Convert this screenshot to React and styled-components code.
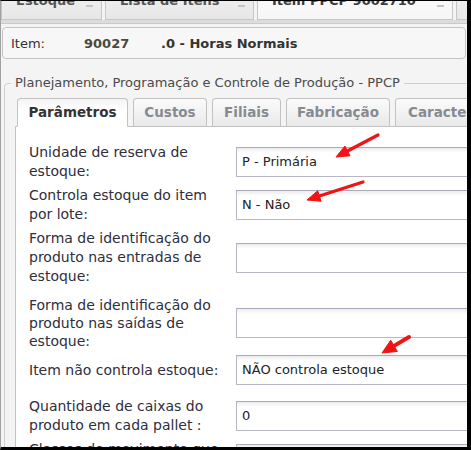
import React from "react";
import styled, { createGlobalStyle } from "styled-components";

const GlobalStyle = createGlobalStyle`
  html, body {
    margin: 0;
    padding: 0;
    background: #000;
  }
`;

const Frame = styled.div`
  position: relative;
  width: 471px;
  height: 450px;
  box-sizing: border-box;
  border-top: 1px solid #000;
  border-right: 4px solid #000;
  border-bottom: 3px solid #000;
  border-left: 1px solid #a0a0a0;
  background: #f4f4f4;
  overflow: hidden;
  display: flex;
  flex-direction: column;
  font-family: "DejaVu Sans", Verdana, sans-serif;
`;

/* window tabs along the top, scrolled partly out of view */
const WindowTabs = styled.div`
  display: flex;
  gap: 3px;
  height: 29px;
  margin-top: -10px;
  flex-shrink: 0;
`;

const WindowTab = styled.div`
  position: relative;
  box-sizing: border-box;
  width: ${(p) => p.$w}px;
  flex-shrink: 0;
  height: 100%;
  border: 1px solid #c6c6c6;
  border-top: none;
  background: ${(p) =>
    p.$active
      ? "linear-gradient(#fbfbfb, #f6f6f6)"
      : "linear-gradient(#f0f0f0, #e7e7e7)"};
  padding-left: 14px;
  font-size: 13px;
  font-weight: bold;
  line-height: 20px;
  color: ${(p) => (p.$active ? "#3a3a3a" : "#555")};
  white-space: nowrap;
  overflow: hidden;
`;

const CloseMark = styled.span`
  position: absolute;
  right: 8px;
  top: 14px;
  width: 7px;
  height: 2px;
  background: #c4c4c4;
`;

const TabStripEdge = styled.div`
  height: 3px;
  background: #dcdcdc;
  border-bottom: 1px solid #cacaca;
  flex-shrink: 0;
`;

const HeaderBox = styled.div`
  display: flex;
  align-items: center;
  height: 30px;
  margin: 3px 1px 0 1px;
  padding-left: 8px;
  border: 1px solid #c4c4c4;
  border-radius: 4px;
  background: #f7f7f7;
  font-size: 13px;
  color: #333;
  flex-shrink: 0;
`;

const HeaderField = styled.span`
  width: ${(p) => (p.$w ? `${p.$w}px` : "auto")};
  font-weight: ${(p) => (p.$bold ? "bold" : "normal")};
  color: ${(p) => p.$color || "#333"};
`;

const Group = styled.fieldset`
  margin: 16px -20px 0 3px;
  padding: 0;
  border: 1px solid #cfcfcf;
  border-radius: 4px;
  flex: 1;
  display: flex;
  flex-direction: column;
  min-width: 0;
`;

const GroupTitle = styled.legend`
  margin-left: 6px;
  padding: 0 4px;
  font-size: 13px;
  line-height: 16px;
  color: #4a4a4a;
`;

const TabRow = styled.div`
  display: flex;
  align-items: flex-end;
  gap: 5px;
  margin: 6px 0 0 10px;
  padding-left: 2px;
  height: 29px;
  position: relative;
  z-index: 1;
`;

const Tab = styled.div`
  box-sizing: border-box;
  width: ${(p) => p.$w}px;
  flex-shrink: 0;
  height: ${(p) => (p.$active ? 29 : 28)}px;
  margin-bottom: ${(p) => (p.$active ? -1 : 0)}px;
  border: 1px solid #c2c2c2;
  border-bottom: ${(p) => (p.$active ? "1px solid #fff" : "none")};
  border-radius: 4px 4px 0 0;
  background: ${(p) =>
    p.$active ? "linear-gradient(#f4f4f4, #fff 40%)" : "linear-gradient(#fbfbfb, #e9e9e9)"};
  font-size: 13.5px;
  font-weight: bold;
  line-height: 26px;
  color: ${(p) => (p.$active ? "#333" : "#868a92")};
  white-space: nowrap;
  overflow: hidden;
  padding: ${(p) => (p.$left ? "0 0 0 12px" : "0")};
  text-align: ${(p) => (p.$left ? "left" : "center")};
`;

const Panel = styled.div`
  flex: 1;
  margin-left: 10px;
  padding: 16px 0 0 13px;
  border-top: 1px solid #c2c2c2;
  border-left: 1px solid #c2c2c2;
  background: #fff;
`;

const Form = styled.div`
  display: flex;
  flex-direction: column;
  gap: 5px;
`;

const Row = styled.div`
  display: grid;
  grid-template-columns: 207px 260px;
  align-items: center;
  margin-top: ${(p) => p.$shift || 0}px;
`;

const Label = styled.div`
  font-size: 14px;
  line-height: ${(p) => (p.$tight ? 18 : 19)}px;
  color: #2e2e3c;
  white-space: nowrap;
`;

const Input = styled.div`
  box-sizing: border-box;
  height: 30px;
  border: 1px solid #b9b9c6;
  border-top-color: #a9a9b8;
  background: linear-gradient(#ececf0, #fff 5px);
  padding-left: 5px;
  font-size: 13px;
  line-height: 28px;
  color: #222;
  white-space: nowrap;
`;

const Overlay = styled.svg`
  position: absolute;
  top: -1px;
  left: -1px;
  pointer-events: none;
`;

const rows = [
  { lines: ["Unidade de reserva de", "estoque:"], value: "P - Primária" },
  { lines: ["Controla estoque do item", "por lote:"], value: "N - Não" },
  { lines: ["Forma de identificação do", "produto nas entradas de", "estoque:"], value: "" },
  { lines: ["Forma de identificação do", "produto nas saídas de", "estoque:"], value: "", tight: true, shift: 5 },
  { lines: ["Item não controla estoque:"], value: "NÃO controla estoque" },
  { lines: ["Quantidade de caixas do", "produto em cada pallet :"], value: "0", shift: 7 },
  { lines: ["Classes de movimento que", "geram estoque:"], value: "S - S" },
];

function Arrow({ from, to, head = 13, spread = 11, width = 3.2 }) {
  const [x1, y1] = from;
  const [x2, y2] = to;
  const len = Math.hypot(x2 - x1, y2 - y1);
  const ux = (x2 - x1) / len;
  const uy = (y2 - y1) / len;
  const bx = x2 - ux * head;
  const by = y2 - uy * head;
  const nx = -uy * (spread / 2);
  const ny = ux * (spread / 2);
  return (
    <g fill="#f01414" stroke="#f01414">
      <line x1={x1} y1={y1} x2={bx} y2={by} strokeWidth={width} strokeLinecap="round" />
      <polygon
        points={`${x2},${y2} ${bx + nx},${by + ny} ${bx - nx},${by - ny}`}
        strokeWidth="1"
        strokeLinejoin="round"
      />
    </g>
  );
}

export default function App() {
  return (
    <>
      <GlobalStyle />
      <Frame>
        <WindowTabs>
          <WindowTab $w={101}>
            Estoque
            <CloseMark />
          </WindowTab>
          <WindowTab $w={149}>
            Lista de Itens
            <CloseMark />
          </WindowTab>
          <WindowTab $w={196} $active>
            Item PPCP 9002710
            <CloseMark />
          </WindowTab>
          <WindowTab $w={14} />
        </WindowTabs>
        <TabStripEdge />

        <HeaderBox>
          <HeaderField $w={73}>Item:</HeaderField>
          <HeaderField $w={77} $bold $color="#4a4a3c">
            90027
          </HeaderField>
          <HeaderField $bold>.0 - Horas Normais</HeaderField>
        </HeaderBox>

        <Group>
          <GroupTitle>Planejamento, Programação e Controle de Produção - PPCP</GroupTitle>
          <TabRow>
            <Tab $w={111} $active>Parâmetros</Tab>
            <Tab $w={74}>Custos</Tab>
            <Tab $w={69}>Filiais</Tab>
            <Tab $w={104}>Fabricação</Tab>
            <Tab $w={120} $left>Características</Tab>
          </TabRow>
          <Panel>
            <Form>
              {rows.map((r, i) => (
                <Row key={i} $shift={r.shift}>
                  <Label $tight={r.tight}>
                    {r.lines.map((l, j) => (
                      <div key={j}>{l}</div>
                    ))}
                  </Label>
                  <Input>{r.value}</Input>
                </Row>
              ))}
            </Form>
          </Panel>
        </Group>

        <Overlay width="471" height="450" viewBox="0 0 471 450">
          <Arrow from={[378, 135]} to={[336, 157]} />
          <Arrow from={[363, 182]} to={[307, 200]} />
          <Arrow from={[409, 337]} to={[382, 353]} head={14} spread={13} width={4} />
        </Overlay>
      </Frame>
    </>
  );
}
